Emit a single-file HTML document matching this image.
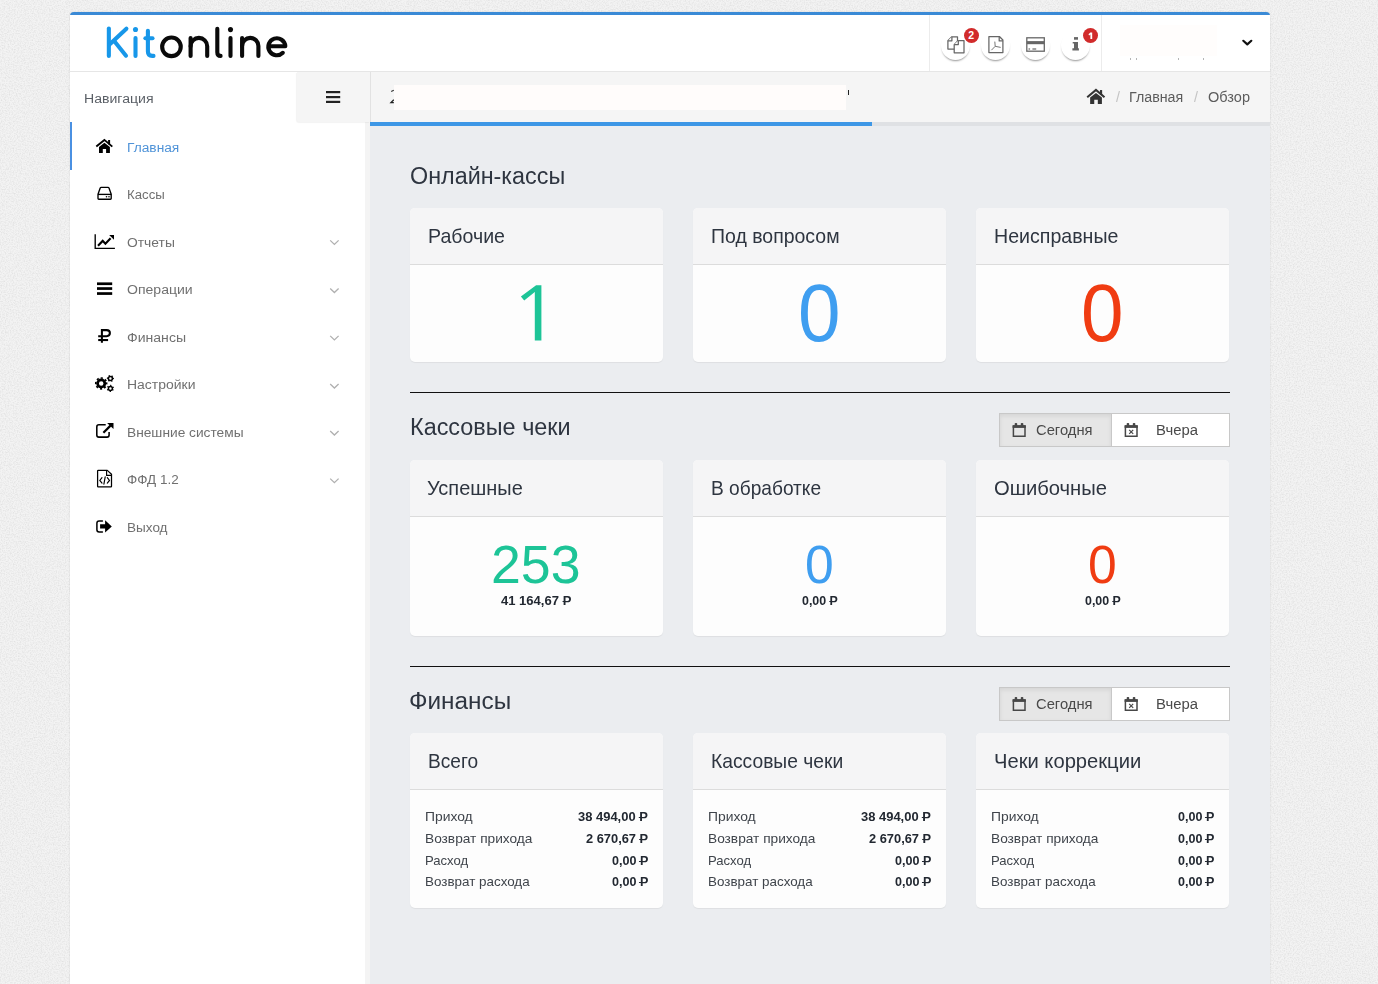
<!DOCTYPE html>
<html><head><meta charset="utf-8">
<style>
*{box-sizing:border-box;margin:0;padding:0}
html,body{width:1378px;height:984px;overflow:hidden}
body{background:#ebebeb;font-family:"Liberation Sans",sans-serif;position:relative}
.abs{position:absolute}
#frame{left:70px;top:12px;width:1200px;height:980px;background:#fff;border-top:3px solid #3a8ad6;border-radius:4px 4px 0 0;box-shadow:0 0 2px rgba(0,0,0,.12)}
#header{left:70px;top:15px;width:1200px;height:57px;background:#fff;border-bottom:1px solid #e6e6e6}
#sidebar{left:70px;top:72px;width:295px;height:912px;background:#fff}
#sidestrip{left:365px;top:122px;width:5px;height:862px;background:#f4f4f4}
#content{left:370px;top:126px;width:900px;height:858px;background:#ebedf0}
#toggle{left:297px;top:72px;width:73px;height:50px;background:#f5f5f5;border-radius:0 0 0 3px;box-shadow:-1px 1px 1px rgba(0,0,0,.05)}
#crumbbar{left:370px;top:72px;width:900px;height:50px;background:#f5f5f5;border-left:1px solid #e2e2e2}
#progress{left:370px;top:122px;width:502px;height:4px;background:#3d97e6}
#progress2{left:872px;top:122px;width:398px;height:4px;background:#dfe1e4}
.t{position:absolute;white-space:nowrap;transform-origin:0 0}
.card{position:absolute;width:253px;background:#fdfdfd;border-radius:5px;box-shadow:0 1px 1px rgba(0,0,0,.06);overflow:hidden}
.ch{position:absolute;left:0;top:0;width:100%;height:57px;background:#f5f5f6;border-bottom:1px solid #dcdcdc}
.rub{position:relative;display:inline-block}
.rub:after{content:"";position:absolute;left:-0.04em;top:0.5em;width:0.44em;height:0.095em;background:currentColor}
.bg{position:absolute;width:231px;height:34px;border:1px solid #c8c8c8;background:#fff}
.b1{position:absolute;left:0;top:0;width:112px;height:32px;background:#e6e6e6;border-right:1px solid #c8c8c8;box-shadow:inset 0 2px 4px rgba(0,0,0,.08)}
.circ{position:absolute;width:29px;height:29px;border-radius:50%;background:#fff;box-shadow:0 2px 2px -1px rgba(0,0,0,.42)}
.badge{position:absolute;width:15.2px;height:15.2px;border-radius:50%;background:#d12b2b;color:#fff;font-weight:700;font-size:10.5px;line-height:15.2px;text-align:center}
svg.abs{position:absolute;overflow:visible}
</style></head><body>
<svg class="abs" style="left:0;top:0" width="1378" height="984"><filter id="nz" x="0" y="0" width="100%" height="100%"><feTurbulence type="fractalNoise" baseFrequency="0.75" numOctaves="2" seed="3" result="t"/><feColorMatrix type="matrix" values="0 0 0 0 0.55  0 0 0 0 0.55  0 0 0 0 0.55  0 0 0 -1.6 1.0"/></filter><rect width="1378" height="984" fill="#f3f3f3"/><rect width="1378" height="984" filter="url(#nz)" opacity="0.45"/></svg>
<div id="frame" class="abs"></div>
<div id="header" class="abs"></div>
<div id="sidebar" class="abs"></div>
<div id="sidestrip" class="abs"></div>
<div id="content" class="abs"></div>
<div id="toggle" class="abs"></div>
<div id="crumbbar" class="abs"></div>
<div id="progress" class="abs"></div>
<div id="progress2" class="abs"></div>
<svg class="abs" style="left:92px;top:135px;" width="26" height="22" viewBox="92 135 26 22"><g transform="translate(96,139.5) scale(1.0) translate(-96,-139.5)" fill="#000">
<path d="M96.3,146.6 L104.4,139.9 L112.3,146.6" fill="none" stroke="#000" stroke-width="1.9"/>
<rect x="108.1" y="140" width="2" height="4.4"/>
<path d="M99,147 L104.4,142.7 L109.9,147 V152.9 H106.1 V149 H102.8 V152.9 H99 Z"/>
</g></svg>
<svg class="abs" style="left:92px;top:182px;" width="26" height="22" viewBox="92 182 26 22"><g fill="none" stroke="#000" stroke-width="1.35" stroke-linejoin="round">
<path d="M98,194.2 L100.2,188 Q100.5,187.4 101.2,187.4 H108 Q108.7,187.4 109,188 L111.2,194.2 V198.4 Q111.2,199.2 110.4,199.2 H98.8 Q98,199.2 98,198.4 Z"/>
<path d="M98,194.4 H111.2"/></g>
<circle cx="106.5" cy="196.8" r="0.8" fill="#000"/><circle cx="109" cy="196.8" r="0.8" fill="#000"/></svg>
<svg class="abs" style="left:90px;top:229px;" width="30" height="24" viewBox="90 229 30 24"><path d="M95.2,234.2 V248.4 H114.9" fill="none" stroke="#000" stroke-width="1.35"/>
<path d="M98,245.8 L102.7,240.9 L105.4,243.8 L110.6,238.3" fill="none" stroke="#000" stroke-width="2.1"/>
<path d="M109.2,235 H114 V239.8 Z" fill="#000"/></svg>
<svg class="abs" style="left:92px;top:278px;" width="26" height="22" viewBox="92 278 26 22"><rect x="97" y="282.4" width="15.2" height="2.7" fill="#000"/>
<rect x="97" y="287.2" width="15.2" height="2.7" fill="#000"/><rect x="97" y="292.2" width="15.2" height="2.7" fill="#000"/></svg>
<svg class="abs" style="left:92px;top:325px;" width="26" height="22" viewBox="92 325 26 22"><g fill="none" stroke="#000" stroke-width="2.05">
<path d="M101.9,342.8 V330.1 H106.6 Q109.9,330.1 109.9,333.1 Q109.9,336.2 106.6,336.2 H98.2"/>
<path d="M98.2,340.05 H108.1"/></g></svg>
<svg class="abs" style="left:90px;top:370px;" width="30" height="28" viewBox="90 370 30 28"><g fill="none" stroke="#000">
<circle cx="101.2" cy="383.4" r="3.6" stroke-width="2.7"/>
<circle cx="101.2" cy="383.4" r="5.4" stroke-width="1.7" stroke-dasharray="2.1 2.14" transform="rotate(-11.7 101.2 383.4)"/>
<circle cx="110.4" cy="378.4" r="2.0" stroke-width="1.5"/>
<circle cx="110.4" cy="378.4" r="3.0" stroke-width="1.1" stroke-dasharray="1.3 1.84" transform="rotate(-12 110.4 378.4)"/>
<circle cx="110.4" cy="388.4" r="2.0" stroke-width="1.5"/>
<circle cx="110.4" cy="388.4" r="3.0" stroke-width="1.1" stroke-dasharray="1.3 1.84" transform="rotate(18 110.4 388.4)"/>
</g></svg>
<svg class="abs" style="left:90px;top:418px;" width="30" height="24" viewBox="90 418 30 24"><path d="M105.7,424.8 H98.9 Q96.8,424.8 96.8,426.9 V435 Q96.8,437.1 98.9,437.1 H107 Q109.1,437.1 109.1,435 V431.9" fill="none" stroke="#000" stroke-width="1.55"/>
<path d="M103.4,432.7 L110.5,425.6" fill="none" stroke="#000" stroke-width="2.2"/>
<path d="M107.1,422.9 H113.5 V429 Z" fill="#000"/></svg>
<svg class="abs" style="left:90px;top:465px;" width="30" height="26" viewBox="90 465 30 26"><path d="M98.2,470.4 H107.3 L111.5,474.3 V486.3 Q111.5,486.9 110.9,486.9 H98.2 Q97.6,486.9 97.6,486.3 V471 Q97.6,470.4 98.2,470.4 Z" fill="none" stroke="#000" stroke-width="1.25" stroke-linejoin="round"/>
<path d="M106.6,470.4 V475.3 H111.5" fill="none" stroke="#000" stroke-width="1.15"/>
<path d="M102,477.6 L99.8,480.4 L102,483.1 M107.3,477.6 L109.5,480.4 L107.3,483.1 M105.2,476.8 L103.9,484.2" fill="none" stroke="#000" stroke-width="1.15" stroke-linecap="round"/></svg>
<svg class="abs" style="left:90px;top:515px;" width="30" height="24" viewBox="90 515 30 24"><path d="M102.4,521.1 H99.1 Q96.9,521.1 96.9,523.3 V529.7 Q96.9,531.9 99.1,531.9 H102.4" fill="none" stroke="#000" stroke-width="1.5" stroke-linecap="round"/>
<path d="M100.1,524.3 H105.1 V520.2 L111.8,526.4 L105.1,532.6 V528.5 H100.1 Z" fill="#000"/></svg>
<svg class="abs" style="left:326px;top:236px;" width="16" height="12" viewBox="326 236 16 12"><path d="M330.2,240.4 L334.4,244.4 L338.6,240.4" fill="none" stroke="#b0b0b0" stroke-width="1.3"/></svg>
<svg class="abs" style="left:326px;top:284px;" width="16" height="12" viewBox="326 284 16 12"><path d="M330.2,288.5 L334.4,292.5 L338.6,288.5" fill="none" stroke="#b0b0b0" stroke-width="1.3"/></svg>
<svg class="abs" style="left:326px;top:331px;" width="16" height="12" viewBox="326 331 16 12"><path d="M330.2,335.9 L334.4,339.9 L338.6,335.9" fill="none" stroke="#b0b0b0" stroke-width="1.3"/></svg>
<svg class="abs" style="left:326px;top:380px;" width="16" height="12" viewBox="326 380 16 12"><path d="M330.2,384.0 L334.4,388.0 L338.6,384.0" fill="none" stroke="#b0b0b0" stroke-width="1.3"/></svg>
<svg class="abs" style="left:326px;top:427px;" width="16" height="12" viewBox="326 427 16 12"><path d="M330.2,431.0 L334.4,435.0 L338.6,431.0" fill="none" stroke="#b0b0b0" stroke-width="1.3"/></svg>
<svg class="abs" style="left:326px;top:474px;" width="16" height="12" viewBox="326 474 16 12"><path d="M330.2,478.6 L334.4,482.6 L338.6,478.6" fill="none" stroke="#b0b0b0" stroke-width="1.3"/></svg>
<div class="circ" style="left:941.3px;top:31px"></div>
<div class="circ" style="left:981.3px;top:31px"></div>
<div class="circ" style="left:1021.3px;top:31px"></div>
<div class="circ" style="left:1061.3px;top:31px"></div>
<svg class="abs" style="left:940px;top:30px;" width="34" height="28" viewBox="940 30 34 28"><g fill="#fff" stroke="#666" stroke-width="1.25" stroke-linejoin="round">
<path d="M951.9,36.8 H957.5 V49 H947.9 V40.8 Z"/>
<path d="M951.9,36.8 V40.8 H947.9"/>
<path d="M958.3,40.5 H964 V52.8 H954.2 V44.6 Z"/>
<path d="M958.3,40.5 V44.6 H954.2"/></g></svg>
<svg class="abs" style="left:984px;top:32px;" width="24" height="26" viewBox="984 32 24 26"><g fill="none" stroke="#666" stroke-width="1.25" stroke-linejoin="round">
<path d="M988.9,36.5 H999.4 L1002.9,40 V52.6 H988.9 Z"/>
<path d="M999.2,36.5 V40.9 H1002.9"/></g>
<path d="M991.4,50.2 L995.2,46.3 L994.8,41.6 M995.2,46.3 L1000.7,47.4" fill="none" stroke="#666" stroke-width="0.9"/></svg>
<svg class="abs" style="left:1022px;top:34px;" width="28" height="22" viewBox="1022 34 28 22"><rect x="1026.8" y="37.8" width="17.5" height="13.4" fill="none" stroke="#666" stroke-width="1.3"/>
<rect x="1026.8" y="41.1" width="17.5" height="3.1" fill="#666"/>
<rect x="1028.5" y="48.4" width="1.6" height="1.2" fill="#666"/><rect x="1032.4" y="48.4" width="3.8" height="1.2" fill="#666"/></svg>
<svg class="abs" style="left:1068px;top:34px;" width="16" height="20" viewBox="1068 34 16 20"><rect x="1074" y="37.1" width="4" height="2.6" fill="#666"/>
<path d="M1072.7,42.1 H1078 V48.3 H1078.9 V50.6 H1072.4 V48.3 H1074 V43.4 H1072.7 Z" fill="#666"/></svg>
<div class="badge" style="left:963.5px;top:27.5px">2</div>
<div class="badge" style="left:1083.3px;top:27.5px"></div>
<svg class="abs" style="left:1084px;top:28px;" width="14" height="14" viewBox="1084 28 14 14"><path d="M1090.4,32.4 H1092.2 V38.9 H1090.4 V34.6 L1089.1,35.4 L1088.5,34.3 Z" fill="#fff"/></svg>
<div class="abs" style="left:929px;top:15px;width:1px;height:56px;background:#ececec"></div>
<div class="abs" style="left:1101px;top:15px;width:1px;height:56px;background:#ececec"></div>
<div class="abs" style="left:1120px;top:25px;width:97px;height:31px;background:#fffdfc"></div>
<div class="abs" style="left:1130px;top:57.5px;width:1px;height:2px;background:#b5b5b5"></div>
<div class="abs" style="left:1136px;top:57.5px;width:1px;height:2px;background:#b5b5b5"></div>
<div class="abs" style="left:1177.5px;top:57.5px;width:1px;height:2px;background:#b5b5b5"></div>
<div class="abs" style="left:1202.5px;top:57.5px;width:1px;height:2px;background:#b5b5b5"></div>
<svg class="abs" style="left:1238px;top:35px;" width="18" height="14" viewBox="1238 35 18 14"><path d="M1243.3,40.8 L1247.3,44.4 L1251.3,40.8" fill="none" stroke="#111" stroke-width="2.2" stroke-linecap="round" stroke-linejoin="round"/></svg>
<svg class="abs" style="left:322px;top:86px;" width="22" height="22" viewBox="322 86 22 22"><rect x="326" y="91" width="14.2" height="2.2" fill="#222"/><rect x="326" y="96" width="14.2" height="2.2" fill="#222"/><rect x="326" y="100.8" width="14.2" height="2.2" fill="#222"/></svg>
<svg class="abs" style="left:1084px;top:86px;" width="24" height="20" viewBox="1084 86 24 20"><g transform="translate(1086.9,89.5) scale(1.08) translate(-96,-139.5)" fill="#333">
<path d="M96.3,146.6 L104.4,139.9 L112.3,146.6" fill="none" stroke="#333" stroke-width="1.9"/>
<rect x="108.1" y="140" width="2" height="4.4"/>
<path d="M99,147 L104.4,142.7 L109.9,147 V152.9 H106.1 V149 H102.8 V152.9 H99 Z"/>
</g></svg>
<svg class="abs" style="left:388px;top:86px;" width="10" height="20" viewBox="388 86 10 20"><path d="M391.2,91.5 L393.8,90.3" stroke="#333" stroke-width="1.2"/><path d="M393.8,99.8 L391,102.6 H393.8" fill="none" stroke="#222" stroke-width="1.3"/></svg>
<div class="abs" style="left:847.6px;top:89.9px;width:1.4px;height:4.9px;background:#222"></div>
<svg class="abs" style="left:100px;top:20px;" width="195" height="45" viewBox="100 20 195 45"><g stroke="#1797e9" fill="none" stroke-width="4.1" stroke-linecap="round" stroke-linejoin="round">
<path d="M108.85,28.6 V55.9"/>
<path d="M126.4,28.7 L109.5,44.6"/>
<path d="M114.4,41.3 L126,55.7"/>
<path d="M135.5,38 V55.9"/>
<path d="M147.9,30.8 V51.6 Q147.9,55.9 152.2,55.9 H153.5"/>
<path d="M145.4,38.2 H152.5"/>
</g><circle cx="135.5" cy="29.5" r="2.55" fill="#1797e9"/>
<g stroke="#0a0a0a" fill="none" stroke-width="4.1" stroke-linecap="round" stroke-linejoin="round">
<circle cx="171.45" cy="46.85" r="9.3"/>
<path d="M190.6,55.9 V38"/>
<path d="M190.6,46.2 A8.3,8.3 0 0 1 207.2,46.2 V55.9"/>
<path d="M217.3,28.7 V52.2 Q217.3,55.9 220.6,55.9"/>
<path d="M230.5,38 V55.9"/>
<path d="M242.1,55.9 V38"/>
<path d="M242.1,46.05 A8.15,8.15 0 0 1 258.4,46.05 V55.9"/>
<path d="M268.4,46.2 H285.3 A8.5,8.5 0 1 0 282.8,52.8"/>
</g><circle cx="230.5" cy="29.6" r="2.55" fill="#0a0a0a"/></svg>
<div class="t" style="left:84.37px;top:92px;font-size:13.08px;line-height:13.08px;transform:scaleX(1.0761);color:#5a5f66;">Навигация</div>
<div class="t" style="left:126.70px;top:141px;font-size:13.08px;line-height:13.08px;transform:scaleX(1.0506);color:#4f93d8;">Главная</div>
<div class="t" style="left:126.74px;top:188px;font-size:13.08px;line-height:13.08px;transform:scaleX(1.0099);color:#707070;">Кассы</div>
<div class="t" style="left:126.68px;top:236px;font-size:13.08px;line-height:13.08px;transform:scaleX(1.0581);color:#707070;">Отчеты</div>
<div class="t" style="left:126.67px;top:283px;font-size:13.08px;line-height:13.08px;transform:scaleX(1.0734);color:#707070;">Операции</div>
<div class="t" style="left:126.63px;top:331px;font-size:13.08px;line-height:13.08px;transform:scaleX(1.0749);color:#707070;">Финансы</div>
<div class="t" style="left:126.68px;top:378px;font-size:13.08px;line-height:13.08px;transform:scaleX(1.0675);color:#707070;">Настройки</div>
<div class="t" style="left:126.70px;top:426px;font-size:13.08px;line-height:13.08px;transform:scaleX(1.0495);color:#707070;">Внешние системы</div>
<div class="t" style="left:126.66px;top:473px;font-size:13.08px;line-height:13.08px;transform:scaleX(1.0302);color:#707070;">ФФД 1.2</div>
<div class="t" style="left:126.72px;top:521px;font-size:13.08px;line-height:13.08px;transform:scaleX(1.0351);color:#707070;">Выход</div>
<div class="abs" style="left:70px;top:122px;width:2px;height:48px;background:#4a90e2"></div>
<div class="t" style="left:1129.06px;top:90px;font-size:14.24px;line-height:14.24px;transform:scaleX(1.0013);color:#5c5c5c;">Главная</div>
<div class="t" style="left:1207.85px;top:90px;font-size:14.24px;line-height:14.24px;transform:scaleX(1.0205);color:#5c5c5c;">Обзор</div>
<div class="t" style="left:1115.50px;top:90px;font-size:14.24px;line-height:14.24px;transform:scaleX(1.0029);color:#c4c4c4;">/</div>
<div class="t" style="left:1193.50px;top:90px;font-size:14.24px;line-height:14.24px;transform:scaleX(1.0029);color:#c4c4c4;">/</div>
<div class="abs" style="left:394px;top:85px;width:452px;height:25px;background:#fffcfb"></div>
<div class="t" style="left:409.55px;top:164px;font-size:24.42px;line-height:24.42px;transform:scaleX(0.9563);color:#2e3540;">Онлайн-кассы</div>
<div class="t" style="left:409.93px;top:415px;font-size:23.98px;line-height:23.98px;transform:scaleX(0.9768);color:#2e3540;">Кассовые чеки</div>
<div class="t" style="left:409.26px;top:689px;font-size:24.42px;line-height:24.42px;transform:scaleX(0.9979);color:#2e3540;">Финансы</div>
<div class="abs" style="left:410px;top:392px;width:820px;height:1px;background:#111"></div>
<div class="abs" style="left:410px;top:666px;width:820px;height:1px;background:#111"></div>
<div class="card" style="left:410px;top:208px;height:154px"><div class="ch"></div></div>
<div class="card" style="left:693px;top:208px;height:154px"><div class="ch"></div></div>
<div class="card" style="left:976px;top:208px;height:154px"><div class="ch"></div></div>
<div class="card" style="left:410px;top:460px;height:176px"><div class="ch"></div></div>
<div class="card" style="left:693px;top:460px;height:176px"><div class="ch"></div></div>
<div class="card" style="left:976px;top:460px;height:176px"><div class="ch"></div></div>
<div class="card" style="left:410px;top:733px;height:175px"><div class="ch"></div></div>
<div class="card" style="left:693px;top:733px;height:175px"><div class="ch"></div></div>
<div class="card" style="left:976px;top:733px;height:175px"><div class="ch"></div></div>
<div class="t" style="left:427.73px;top:227px;font-size:19.48px;line-height:19.48px;transform:scaleX(1.0053);color:#2e3540;">Рабочие</div>
<div class="t" style="left:710.94px;top:227px;font-size:19.48px;line-height:19.48px;transform:scaleX(1.0006);color:#2e3540;">Под вопросом</div>
<div class="t" style="left:994.43px;top:227px;font-size:19.48px;line-height:19.48px;transform:scaleX(1.0062);color:#2e3540;">Неисправные</div>
<div class="t" style="left:427.30px;top:479px;font-size:19.48px;line-height:19.48px;transform:scaleX(1.0258);color:#2e3540;">Успешные</div>
<div class="t" style="left:710.97px;top:479px;font-size:19.48px;line-height:19.48px;transform:scaleX(0.9822);color:#2e3540;">В обработке</div>
<div class="t" style="left:994.49px;top:479px;font-size:19.48px;line-height:19.48px;transform:scaleX(1.0381);color:#2e3540;">Ошибочные</div>
<div class="t" style="left:427.57px;top:752px;font-size:19.48px;line-height:19.48px;transform:scaleX(0.9817);color:#2e3540;">Всего</div>
<div class="t" style="left:710.96px;top:752px;font-size:19.48px;line-height:19.48px;transform:scaleX(0.9894);color:#2e3540;">Кассовые чеки</div>
<div class="t" style="left:994.09px;top:752px;font-size:19.48px;line-height:19.48px;transform:scaleX(1.0362);color:#2e3540;">Чеки коррекции</div>
<svg class="abs" style="left:515px;top:280px;" width="35" height="65" viewBox="515 280 35 65"><path d="M541.4,285.3 V340.4 H534.8 V291.9 L524.2,300.5 L520.9,296.5 L536.1,285.3 Z" fill="#1dc497"/></svg>
<div class="t" style="left:798.14px;top:272px;font-size:81.69px;line-height:81.69px;transform:scaleX(0.9360);color:#3f9ef0;">0</div>
<div class="t" style="left:1081.14px;top:272px;font-size:81.69px;line-height:81.69px;transform:scaleX(0.9360);color:#f03c12;">0</div>
<div class="t" style="left:490.82px;top:538px;font-size:53.10px;line-height:53.10px;transform:scaleX(1.0104);color:#1dc497;">253</div>
<div class="t" style="left:805.43px;top:538px;font-size:54.37px;line-height:54.37px;transform:scaleX(0.9503);color:#3f9ef0;">0</div>
<div class="t" style="left:1088.43px;top:538px;font-size:54.37px;line-height:54.37px;transform:scaleX(0.9503);color:#f03c12;">0</div>
<div class="t" style="left:501.40px;top:595px;font-size:12.29px;line-height:12.29px;transform:scaleX(1.0614);color:#222831;font-weight:700;">41 164,67 <span class="rub">P</span></div>
<div class="t" style="left:801.70px;top:595px;font-size:12.29px;line-height:12.29px;transform:scaleX(1.0102);color:#222831;font-weight:700;">0,00 <span class="rub">P</span></div>
<div class="t" style="left:1084.70px;top:595px;font-size:12.29px;line-height:12.29px;transform:scaleX(1.0102);color:#222831;font-weight:700;">0,00 <span class="rub">P</span></div>
<div class="t" style="left:424.59px;top:811px;font-size:12.79px;line-height:12.79px;transform:scaleX(1.0838);color:#3f444b;">Приход</div>
<div class="t" style="left:577.98px;top:811px;font-size:12.57px;line-height:12.57px;transform:scaleX(1.0303);color:#222831;font-weight:700;">38 494,00 <span class="rub">P</span></div>
<div class="t" style="left:424.60px;top:833px;font-size:12.79px;line-height:12.79px;transform:scaleX(1.0713);color:#3f444b;">Возврат прихода</div>
<div class="t" style="left:585.65px;top:833px;font-size:12.57px;line-height:12.57px;transform:scaleX(1.0223);color:#222831;font-weight:700;">2 670,67 <span class="rub">P</span></div>
<div class="t" style="left:424.65px;top:855px;font-size:12.79px;line-height:12.79px;transform:scaleX(1.0237);color:#3f444b;">Расход</div>
<div class="t" style="left:611.50px;top:855px;font-size:12.57px;line-height:12.57px;transform:scaleX(0.9985);color:#222831;font-weight:700;">0,00 <span class="rub">P</span></div>
<div class="t" style="left:424.63px;top:876px;font-size:12.79px;line-height:12.79px;transform:scaleX(1.0492);color:#3f444b;">Возврат расхода</div>
<div class="t" style="left:611.50px;top:876px;font-size:12.57px;line-height:12.57px;transform:scaleX(0.9985);color:#222831;font-weight:700;">0,00 <span class="rub">P</span></div>
<div class="t" style="left:707.59px;top:811px;font-size:12.79px;line-height:12.79px;transform:scaleX(1.0838);color:#3f444b;">Приход</div>
<div class="t" style="left:860.98px;top:811px;font-size:12.57px;line-height:12.57px;transform:scaleX(1.0303);color:#222831;font-weight:700;">38 494,00 <span class="rub">P</span></div>
<div class="t" style="left:707.60px;top:833px;font-size:12.79px;line-height:12.79px;transform:scaleX(1.0713);color:#3f444b;">Возврат прихода</div>
<div class="t" style="left:868.65px;top:833px;font-size:12.57px;line-height:12.57px;transform:scaleX(1.0223);color:#222831;font-weight:700;">2 670,67 <span class="rub">P</span></div>
<div class="t" style="left:707.65px;top:855px;font-size:12.79px;line-height:12.79px;transform:scaleX(1.0237);color:#3f444b;">Расход</div>
<div class="t" style="left:894.50px;top:855px;font-size:12.57px;line-height:12.57px;transform:scaleX(0.9985);color:#222831;font-weight:700;">0,00 <span class="rub">P</span></div>
<div class="t" style="left:707.63px;top:876px;font-size:12.79px;line-height:12.79px;transform:scaleX(1.0492);color:#3f444b;">Возврат расхода</div>
<div class="t" style="left:894.50px;top:876px;font-size:12.57px;line-height:12.57px;transform:scaleX(0.9985);color:#222831;font-weight:700;">0,00 <span class="rub">P</span></div>
<div class="t" style="left:990.59px;top:811px;font-size:12.79px;line-height:12.79px;transform:scaleX(1.0838);color:#3f444b;">Приход</div>
<div class="t" style="left:1177.50px;top:811px;font-size:12.57px;line-height:12.57px;transform:scaleX(0.9985);color:#222831;font-weight:700;">0,00 <span class="rub">P</span></div>
<div class="t" style="left:990.60px;top:833px;font-size:12.79px;line-height:12.79px;transform:scaleX(1.0713);color:#3f444b;">Возврат прихода</div>
<div class="t" style="left:1177.50px;top:833px;font-size:12.57px;line-height:12.57px;transform:scaleX(0.9985);color:#222831;font-weight:700;">0,00 <span class="rub">P</span></div>
<div class="t" style="left:990.65px;top:855px;font-size:12.79px;line-height:12.79px;transform:scaleX(1.0237);color:#3f444b;">Расход</div>
<div class="t" style="left:1177.50px;top:855px;font-size:12.57px;line-height:12.57px;transform:scaleX(0.9985);color:#222831;font-weight:700;">0,00 <span class="rub">P</span></div>
<div class="t" style="left:990.63px;top:876px;font-size:12.79px;line-height:12.79px;transform:scaleX(1.0492);color:#3f444b;">Возврат расхода</div>
<div class="t" style="left:1177.50px;top:876px;font-size:12.57px;line-height:12.57px;transform:scaleX(0.9985);color:#222831;font-weight:700;">0,00 <span class="rub">P</span></div>
<div class="bg" style="left:999px;top:413px"><div class="b1"></div><div class="b2"></div></div>
<svg class="abs" style="left:1010px;top:421px;" width="18" height="18" viewBox="1010 421 18 18"><g transform="translate(0.0,0.0)">
<path d="M1013.4,426.4 H1025 V436.2 H1013.4 Z" fill="none" stroke="#474747" stroke-width="1.5"/>
<rect x="1012.6" y="425.1" width="13.2" height="2.8" fill="#474747"/>
<rect x="1014.7" y="422.9" width="2.5" height="3.4" rx="0.8" fill="#474747"/>
<rect x="1020.8" y="422.9" width="2.5" height="3.4" rx="0.8" fill="#474747"/></g></svg>
<svg class="abs" style="left:1122px;top:421px;" width="18" height="18" viewBox="1122 421 18 18"><g transform="translate(111.99999999999989,0.0)">
<path d="M1013.4,426.4 H1025 V436.2 H1013.4 Z" fill="none" stroke="#474747" stroke-width="1.5"/>
<rect x="1012.6" y="425.1" width="13.2" height="2.8" fill="#474747"/>
<rect x="1014.7" y="422.9" width="2.5" height="3.4" rx="0.8" fill="#474747"/>
<rect x="1020.8" y="422.9" width="2.5" height="3.4" rx="0.8" fill="#474747"/><path d="M1017.2,429.9 L1021.2,433.9 M1021.2,429.9 L1017.2,433.9" stroke="#474747" stroke-width="1.2"/></g></svg>
<div class="t" style="left:1036.06px;top:423px;font-size:14.83px;line-height:14.83px;transform:scaleX(0.9950);color:#4a4a4a;">Сегодня</div>
<div class="t" style="left:1155.81px;top:423px;font-size:14.83px;line-height:14.83px;transform:scaleX(1.0019);color:#4a4a4a;">Вчера</div>
<div class="bg" style="left:999px;top:687px"><div class="b1"></div><div class="b2"></div></div>
<svg class="abs" style="left:1010px;top:695px;" width="18" height="18" viewBox="1010 695 18 18"><g transform="translate(0.0,274.0)">
<path d="M1013.4,426.4 H1025 V436.2 H1013.4 Z" fill="none" stroke="#474747" stroke-width="1.5"/>
<rect x="1012.6" y="425.1" width="13.2" height="2.8" fill="#474747"/>
<rect x="1014.7" y="422.9" width="2.5" height="3.4" rx="0.8" fill="#474747"/>
<rect x="1020.8" y="422.9" width="2.5" height="3.4" rx="0.8" fill="#474747"/></g></svg>
<svg class="abs" style="left:1122px;top:695px;" width="18" height="18" viewBox="1122 695 18 18"><g transform="translate(111.99999999999989,274.0)">
<path d="M1013.4,426.4 H1025 V436.2 H1013.4 Z" fill="none" stroke="#474747" stroke-width="1.5"/>
<rect x="1012.6" y="425.1" width="13.2" height="2.8" fill="#474747"/>
<rect x="1014.7" y="422.9" width="2.5" height="3.4" rx="0.8" fill="#474747"/>
<rect x="1020.8" y="422.9" width="2.5" height="3.4" rx="0.8" fill="#474747"/><path d="M1017.2,429.9 L1021.2,433.9 M1021.2,429.9 L1017.2,433.9" stroke="#474747" stroke-width="1.2"/></g></svg>
<div class="t" style="left:1036.06px;top:697px;font-size:14.83px;line-height:14.83px;transform:scaleX(0.9950);color:#4a4a4a;">Сегодня</div>
<div class="t" style="left:1155.81px;top:697px;font-size:14.83px;line-height:14.83px;transform:scaleX(1.0019);color:#4a4a4a;">Вчера</div>
</body></html>
